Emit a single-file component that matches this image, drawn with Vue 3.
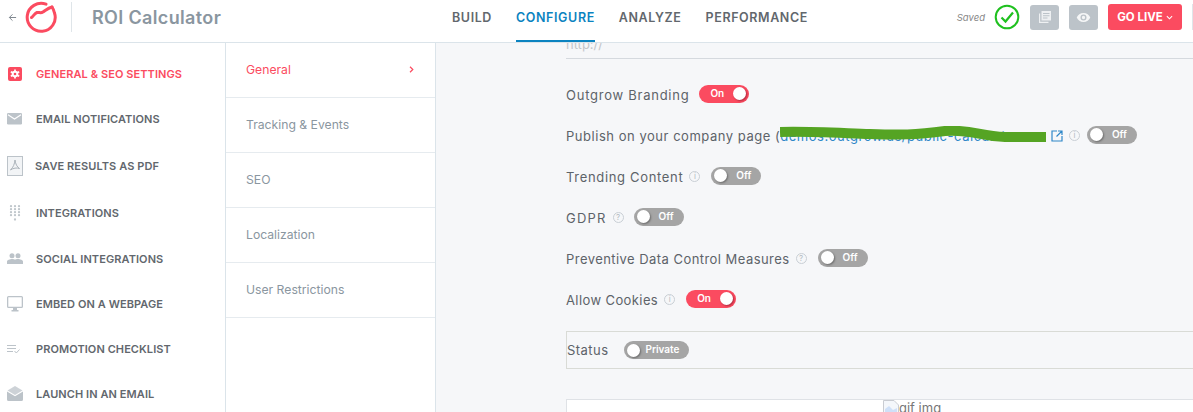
<template>
  <div class="page">
    <header class="topbar">
      <div class="brand">
        <svg class="back" viewBox="0 0 10 10" fill="none" stroke="#7f8890" stroke-width="1.1">
          <path d="M9 5H1.500M5 1.500L1.500 5L5 8.500" />
        </svg>
        <svg class="logo" viewBox="0 0 32 32" fill="none" stroke="#fb4b60" stroke-width="3" stroke-linecap="round">
          <path d="M21 3.200A14 14 0 1 0 29.500 12C29 9.500 28 7.500 27 6" />
          <path d="M6.500 16.500C8.500 15 9.500 12.500 12 11.500C14 11 15.500 12.500 18 11C20.500 9.500 23 7 27 6" />
        </svg>
        <span class="brand-line"></span>
        <span class="title">ROI Calculator</span>
      </div>
      <nav class="tabs">
        <a v-for="tab in tabs" :key="tab" class="tab" :class="{ active: tab === 'CONFIGURE' }">{{ tab }}</a>
      </nav>
      <div class="actions">
        <span class="saved">Saved</span>
        <svg class="saved-check" viewBox="0 0 26 26" fill="none" stroke="#1fc01f">
          <circle cx="13" cy="13" r="11.300" stroke-width="2" />
          <path d="M7.500 13.500L11.500 17.500L19 8.500" stroke-width="2.200" />
        </svg>
        <button class="square-btn">
          <svg viewBox="0 0 14 14" width="14" height="14" fill="#fff">
            <path d="M3.500 1H13V10.500H3.500ZM5 3V4H11.500V3ZM5 5.300V6.300H11.500V5.300ZM5 7.600V8.600H9.500V7.600Z" fill-rule="evenodd" opacity=".75" />
            <path d="M1 3.500H2.200V11.800H10.500V13H1Z" opacity=".75" />
          </svg>
        </button>
        <button class="square-btn">
          <svg viewBox="0 0 16 12" width="15" height="11" fill="#fff">
            <path d="M8 1C4.500 1 1.800 3.200.6 6C1.800 8.800 4.500 11 8 11C11.500 11 14.200 8.800 15.400 6C14.200 3.200 11.500 1 8 1ZM8 9.300A3.300 3.300 0 1 1 8 2.700A3.300 3.300 0 0 1 8 9.300ZM8 4.200A1.800 1.800 0 1 0 8 7.800A1.800 1.800 0 0 0 8 4.200Z" fill-rule="evenodd" opacity=".85" />
          </svg>
        </button>
        <button class="go-live">GO LIVE
          <svg viewBox="0 0 8 5" width="7" height="5" fill="none" stroke="#fff" stroke-width="1.200"><path d="M1 1L4 4L7 1" /></svg>
        </button>
        <span class="end-line"></span>
      </div>
    </header>

    <div class="body">
      <aside class="sidebar">
        <div v-for="item in sideItems" :key="item.label" class="side-item" :class="{ active: item.active }">
          <span class="side-icon">
            <svg v-if="item.icon === 'gear'" class="gear" viewBox="0 0 14 14" width="14" height="14">
              <rect width="14" height="14" rx="2" fill="#fb4b60" />
              <circle cx="7" cy="7" r="3.300" fill="#fff" />
              <path d="M7 2.500V11.500M2.800 4.700L11.200 9.300M2.800 9.300L11.200 4.700" stroke="#fff" stroke-width="1.700" />
              <circle cx="7" cy="7" r="1.300" fill="#fb4b60" />
            </svg>
            <svg v-else-if="item.icon === 'mail'" viewBox="0 0 15 12" width="15" height="12">
              <rect width="15" height="11.500" rx="1.200" fill="#bcc3c9" />
              <path d="M1 1.800L7.500 6L14 1.800" fill="none" stroke="#fff" stroke-width="1.100" />
            </svg>
            <svg v-else-if="item.icon === 'pdf'" viewBox="0 0 16 20" width="16" height="20">
              <rect x=".5" y=".5" width="15" height="19" fill="#f2f4f6" stroke="#bcc3c9" />
              <path d="M8 4C7.500 8 6.500 11 3.500 14C6 12 10 11.500 12.500 12.500C10 11 8.500 8 8 4Z" fill="none" stroke="#aab2b9" />
            </svg>
            <svg v-else-if="item.icon === 'dots'" class="dots" viewBox="0 0 12 16" width="12" height="16" fill="#c0c7cc">
              <template v-for="y in [1.200, 4.200, 7.200, 10.200]" :key="y">
                <circle v-for="x in [2, 6, 10]" :key="x" :cx="x" :cy="y" r="1.150" />
              </template>
              <circle cx="6" cy="14.500" r="1.150" />
            </svg>
            <svg v-else-if="item.icon === 'people'" viewBox="0 0 16 11" width="16" height="11" fill="#bcc3c9">
              <circle cx="5" cy="2.800" r="2.500" />
              <circle cx="11" cy="2.800" r="2.500" />
              <path d="M0 11V8.500C0 7 3 6 5 6C6.500 6 7.700 6.300 8 6.600C8.300 6.300 9.500 6 11 6C13 6 16 7 16 8.500V11Z" />
            </svg>
            <svg v-else-if="item.icon === 'monitor'" viewBox="0 0 16 16" width="16" height="16" fill="#bcc3c9">
              <path d="M1.500 0H14.500A1.500 1.500 0 0 1 16 1.500V10.500A1.500 1.500 0 0 1 14.500 12H1.500A1.500 1.500 0 0 1 0 10.500V1.500A1.500 1.500 0 0 1 1.500 0ZM1.300 1.300V10.700H14.700V1.300Z" fill-rule="evenodd" />
              <path d="M6 12H10V14H11.500V15.500H4.500V14H6Z" />
            </svg>
            <svg v-else-if="item.icon === 'check'" viewBox="0 0 13 10" width="13" height="10" fill="none" stroke="#bcc3c9" stroke-width="1">
              <path d="M0 1.500H9M0 4.500H9M0 7.500H6M7.500 7L9.300 9L12.500 5.500" />
            </svg>
            <svg v-else viewBox="0 0 16 15" width="16" height="15" fill="#bcc3c9">
              <path d="M8 0L15.500 4.500L8 9L.5 4.500Z" opacity=".75" />
              <path d="M0 5.500L8 10.300L16 5.500V13.500A1.500 1.500 0 0 1 14.500 15H1.500A1.500 1.500 0 0 1 0 13.500Z" />
            </svg>
          </span>
          <span>{{ item.label }}</span>
        </div>
      </aside>

      <div class="submenu">
        <div v-for="(name, i) in subItems" :key="name" class="sub-item" :class="{ active: i === 0 }">
          <span>{{ name }}</span>
          <svg v-if="i === 0" viewBox="0 0 5 7" width="5" height="7" fill="none" stroke="#fb4b60" stroke-width="1.200"><path d="M1 .8L3.800 3.500L1 6.200" /></svg>
        </div>
      </div>

      <main class="content">
        <div class="url-field">http://</div>

        <div class="row branding">
          <span>Outgrow Branding</span>
          <span class="toggle on"><b>On</b><i></i></span>
        </div>

        <div class="row publish-row">
          <span class="publish">Publish on your company page (<a class="link">demos.outgrow.us/public-calculator<svg class="scribble" viewBox="0 0 266 16" preserveAspectRatio="none" fill="none" stroke="#55a423" stroke-width="10"><path d="M0 6C25 5 60 7 90 8C120 9 135 9 165 5C190 3 200 10 225 11C240 11 255 11 266 11" /></svg></a></span>
          <svg class="ext" viewBox="0 0 12 12" width="12" height="12" fill="none" stroke="#2f87c8" stroke-width="1.200">
            <path d="M6 1H1V11H11V6M7 1H11V5M11 1L5.500 6.500" />
          </svg>
          <span class="hint info">i</span>
          <span class="toggle off"><i></i><b>Off</b></span>
        </div>

        <div class="row trending">
          <span>Trending Content</span>
          <span class="hint info">i</span>
          <span class="toggle off"><i></i><b>Off</b></span>
        </div>

        <div class="row gdpr">
          <span>GDPR</span>
          <span class="hint">?</span>
          <span class="toggle off"><i></i><b>Off</b></span>
        </div>

        <div class="row preventive">
          <span>Preventive Data Control Measures</span>
          <span class="hint">?</span>
          <span class="toggle off"><i></i><b>Off</b></span>
        </div>

        <div class="row cookies">
          <span>Allow Cookies</span>
          <span class="hint info">i</span>
          <span class="toggle on"><b>On</b><i></i></span>
        </div>

        <div class="status-box">
          <span>Status</span>
          <span class="toggle off private"><i></i><b>Private</b></span>
        </div>

        <div class="gif-box">
          <svg viewBox="0 0 16 16" width="16" height="16">
            <path d="M.5.5H11L15.500 5V15.500H.5Z" fill="#f4f7fb" stroke="#c9ccd2" />
            <path d="M2 14V9L6 6L10 10L14 8V14Z" fill="#cfe0f8" />
          </svg>
          <span>gif img</span>
        </div>
      </main>
    </div>
  </div>
</template>

<script setup>
const tabs = ['BUILD', 'CONFIGURE', 'ANALYZE', 'PERFORMANCE'];

const sideItems = [
  { label: 'GENERAL & SEO SETTINGS', icon: 'gear', active: true },
  { label: 'EMAIL NOTIFICATIONS', icon: 'mail' },
  { label: 'SAVE RESULTS AS PDF', icon: 'pdf' },
  { label: 'INTEGRATIONS', icon: 'dots' },
  { label: 'SOCIAL INTEGRATIONS', icon: 'people' },
  { label: 'EMBED ON A WEBPAGE', icon: 'monitor' },
  { label: 'PROMOTION CHECKLIST', icon: 'check' },
  { label: 'LAUNCH IN AN EMAIL', icon: 'openmail' },
];

const subItems = ['General', 'Tracking & Events', 'SEO', 'Localization', 'User Restrictions'];
</script>

<style>
html,
body {
  margin: 0;
  overflow: hidden;
  background: #fff;
}
</style>

<style scoped>
.page {
  width: 1193px;
  height: 412px;
  overflow: hidden;
  font-family: Inter, "Open Sans", sans-serif;
  color: #5d6369;
}

.topbar {
  height: 42px;
  display: flex;
  align-items: center;
  border-bottom: 1px solid #dbe4ea;
  background: #fff;
}

.brand {
  display: flex;
  align-items: center;
  width: 452px;
  height: 100%;
  flex-shrink: 0;
  padding-bottom: 8px;
  box-sizing: border-box;
}

.back {
  width: 9px;
  height: 9px;
  margin-left: 8px;
}

.logo {
  width: 32px;
  height: 32px;
  margin-left: 8px;
}

.brand-line {
  width: 1px;
  height: 30px;
  background: #dfe5e9;
  margin: 0 20px 0 14px;
}

.title {
  font-size: 18px;
  font-weight: 600;
  letter-spacing: 0.35px;
  color: #8a96a0;
  white-space: nowrap;
}

.tabs {
  display: flex;
  height: 100%;
  gap: 24px;
}

.tab {
  height: 40px;
  line-height: 35px;
  font-size: 12.500px;
  font-weight: 600;
  letter-spacing: 0.6px;
  color: #62676d;
  white-space: nowrap;
  border-bottom: 2px solid transparent;
}

.tab.active {
  color: #0b83c0;
  border-bottom-color: #0b83c0;
}

.actions {
  margin-left: auto;
  display: flex;
  align-items: center;
  height: 100%;
  padding-bottom: 8px;
  box-sizing: border-box;
}

.saved {
  font-size: 9.500px;
  font-style: italic;
  color: #888;
}

.saved-check {
  width: 26px;
  height: 26px;
  margin: 0 10px 0 9px;
}

.square-btn {
  width: 29px;
  height: 25px;
  border: 0;
  border-radius: 3px;
  background: #bcc3c9;
  margin-right: 10px;
  padding: 0;
  display: flex;
  align-items: center;
  justify-content: center;
}

.go-live {
  width: 74px;
  height: 26px;
  border: 0;
  border-radius: 3px;
  background: #fb4b60;
  color: #fff;
  font-family: inherit;
  font-size: 11.500px;
  font-weight: 700;
  padding: 0;
  display: flex;
  align-items: center;
  justify-content: center;
  gap: 3px;
}

.end-line {
  width: 1px;
  height: 26px;
  background: #dfe5e9;
  margin-left: 10px;
}

.body {
  display: flex;
  height: 369px;
}

.sidebar {
  width: 226px;
  flex-shrink: 0;
  padding-top: 8px;
  box-sizing: border-box;
  background: #fff;
  border-right: 1px solid #dbe4ea;
}

.side-item {
  height: 45px;
  display: flex;
  align-items: center;
  font-size: 11px;
  font-weight: 600;
  letter-spacing: 0.08px;
  color: #62676d;
  white-space: nowrap;
  padding-left: 7px;
}

.side-item:nth-child(3) {
  height: 49px;
}

.side-item:nth-child(3) .side-icon {
  width: 28px;
}

.side-item:nth-child(4) {
  height: 46px;
}

.side-item.active {
  color: #fb4b60;
}

.side-icon {
  width: 29px;
  display: flex;
  flex-shrink: 0;
}

.side-icon .gear {
  margin-left: 1px;
}

.side-icon .dots {
  margin-left: 2px;
}

.submenu {
  width: 210px;
  flex-shrink: 0;
  box-sizing: border-box;
  background: #fff;
  border-right: 1px solid #dbe4ea;
}

.sub-item {
  height: 55px;
  box-sizing: border-box;
  border-bottom: 1px solid #e6ebef;
  padding: 0 21px 2px 20px;
  display: flex;
  align-items: center;
  justify-content: space-between;
  font-size: 12.200px;
  color: #8a96a0;
}

.sub-item.active {
  color: #fb4b60;
}

.content {
  flex: 1;
  min-width: 0;
  background: #f6f7f9;
  padding-left: 130px;
  overflow: hidden;
}

.url-field {
  height: 15px;
  line-height: 2px;
  font-size: 13px;
  color: #c4c6c9;
  border-bottom: 1px solid #d5d9de;
  overflow: hidden;
  width: 800px;
}

.row {
  height: 41px;
  display: flex;
  align-items: center;
  font-size: 13px;
  white-space: nowrap;
}

.url-field + .row {
  margin-top: 15px;
}

.branding {
  letter-spacing: 0.75px;
}

.publish-row {
  letter-spacing: 0.53px;
}

.trending {
  letter-spacing: 0.67px;
}

.gdpr {
  letter-spacing: 1.2px;
}

.preventive {
  letter-spacing: 0.45px;
}

.cookies {
  letter-spacing: 0.4px;
}

.publish {
  width: 485px;
}

.link {
  color: #2f87c8;
  position: relative;
}

.scribble {
  position: absolute;
  left: 0;
  top: -2px;
  width: 266px;
  height: 16px;
}

.ext {
  flex-shrink: 0;
}

.hint {
  width: 11px;
  height: 11px;
  box-sizing: border-box;
  border: 1px solid #c9cfd5;
  border-radius: 50%;
  font-size: 8px;
  line-height: 9px;
  text-align: center;
  color: #b4bbc2;
  margin-left: 6px;
  letter-spacing: 0;
}

.toggle {
  width: 50px;
  height: 18px;
  border-radius: 9px;
  margin-left: 11px;
  margin-top: -2px;
  display: flex;
  align-items: center;
  justify-content: space-between;
  padding: 0 3px;
  box-sizing: border-box;
  font-size: 10px;
  letter-spacing: 0;
  color: #fff;
}

.publish-row .toggle {
  margin-left: 7px;
}

.branding .toggle,
.gdpr .toggle {
  margin-left: 10px;
}

.toggle b {
  font-weight: 600;
  margin-top: -2px;
}

.toggle i {
  width: 13px;
  height: 13px;
  border-radius: 50%;
  background: #fff;
}

.toggle.on {
  background: #fb4b60;
  padding-left: 11px;
}

.toggle.on i {
  box-shadow: 1px 1px 2px rgba(120, 20, 40, 0.6);
}

.toggle.off {
  background: #a5a5a5;
  padding-right: 10px;
}

.toggle.off i {
  box-shadow: 1px 1px 2px rgba(60, 60, 60, 0.55);
}

.toggle.private {
  width: 65px;
  margin-left: 16px;
  margin-top: 0;
}

.status-box {
  height: 38px;
  width: 800px;
  margin-top: 11px;
  box-sizing: border-box;
  border: 1px solid #d9dbd6;
  display: flex;
  align-items: center;
  font-size: 13px;
  letter-spacing: 0.45px;
}

.gif-box {
  width: 800px;
  height: 60px;
  margin-top: 30px;
  background: #fff;
  border: 1px solid #dfe2e6;
  box-sizing: border-box;
  padding-left: 316px;
  display: flex;
  font-size: 13px;
  color: #777;
}
</style>
